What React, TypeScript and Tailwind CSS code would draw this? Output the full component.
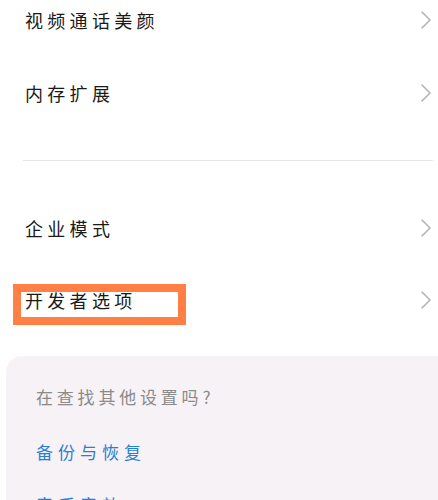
import React from "react";

const Chevron = () => (
  <svg width="12" height="20" viewBox="0 0 12 20" fill="none" className="shrink-0">
    <polyline points="2,2 10,10 2,18" stroke="#b3b3b3" strokeWidth="1.6" strokeLinecap="round" strokeLinejoin="round" />
  </svg>
);

const Row = ({ label, h, children }: { label: string; h: string; children?: React.ReactNode }) => (
  <div className={`relative flex items-center justify-between pl-[25px] pr-[6px] ${h}`}>
    <span className="text-[18px] tracking-[4.3px] text-[#1a1a1a] leading-none">{label}</span>
    <Chevron />
    {children}
  </div>
);

export default function App() {
  return (
    <div
      className="w-[438px] h-[500px] overflow-hidden bg-white"
      style={{ fontFamily: '"Noto Sans CJK SC", "Noto Sans", sans-serif' }}
    >
      <Row label="视频通话美颜" h="h-[40px]" />
      <div className="mt-[16px]">
        <Row label="内存扩展" h="h-[74px]" />
      </div>
      <div className="mt-[30px] ml-[23px] mr-[5px] h-px bg-[#e6e6e6]" />
      <div className="mt-[31px]">
        <Row label="企业模式" h="h-[72px]" />
        <Row label="开发者选项" h="h-[72px]">
          <div className="absolute left-[13px] top-[20px] w-[173px] h-[41px] border-[8px] border-[#ff7f45]" />
        </Row>
      </div>
      <div className="mt-[20px] ml-[6px] mr-[-20px] rounded-[16px] bg-[#f6f2f6] pl-[30px] pt-[31px] h-[200px]">
        <div className="text-[17px] tracking-[3.8px] text-[#8a8a8a] leading-[20px]">在查找其他设置吗?</div>
        <div className="mt-[35px] text-[17px] tracking-[5px] text-[#2a7fd4] leading-[20px]">备份与恢复</div>
        <div className="mt-[33px] text-[17px] tracking-[5px] text-[#2a7fd4] leading-[20px]">音质音效</div>
      </div>
    </div>
  );
}
